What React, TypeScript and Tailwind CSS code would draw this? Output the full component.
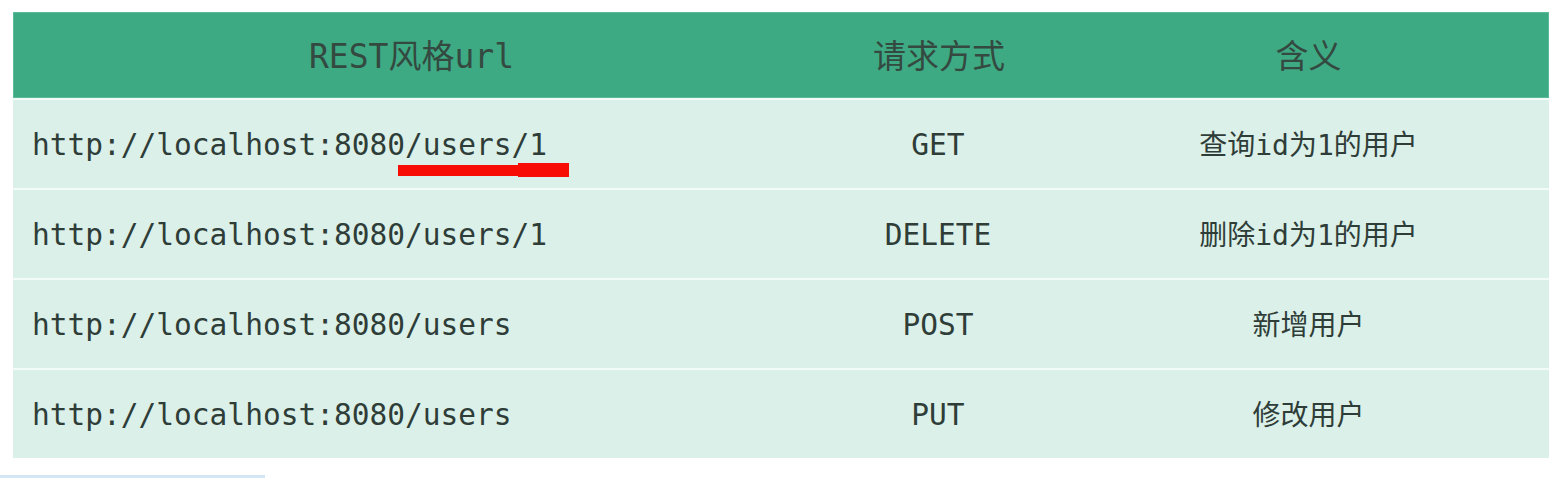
import React from 'react'

type Row = {
    url: string
    method: string
    meaning: string
    marked?: boolean
}

const rows: Row[] = [
    { url: 'http://localhost:8080/users/1', method: 'GET', meaning: '查询id为1的用户', marked: true },
    { url: 'http://localhost:8080/users/1', method: 'DELETE', meaning: '删除id为1的用户' },
    { url: 'http://localhost:8080/users', method: 'POST', meaning: '新增用户' },
    { url: 'http://localhost:8080/users', method: 'PUT', meaning: '修改用户' },
]

const font = 'font-["DejaVu_Sans_Mono","Noto_Sans_CJK_SC",monospace]'

const App = () => {
    return (
        <div className={`w-[1559px] h-[480px] bg-white pt-[12px] overflow-hidden ${font}`}>
            <div className="ml-[13px] w-[1536px] flex flex-col gap-[2px] bg-[#f3fbf8]">
                {/* header */}
                <div className="grid grid-cols-[795px_260px_1fr] h-[86px] pt-[3px] bg-[#3eaa84] border border-[#5cbb98] text-[#34493f] text-[33px] items-center">
                    <div className="text-center">REST风格url</div>
                    <div className="text-center">请求方式</div>
                    <div className="text-center">含义</div>
                </div>

                {rows.map((row, i) => (
                    <div
                        key={i}
                        className="relative grid grid-cols-[795px_260px_1fr] h-[88px] pt-[3px] bg-[#dbf0e8] text-[#2f3d38] items-center"
                    >
                        <div className="pl-[19px] text-[29.5px]">{row.url}</div>
                        <div className="text-center text-[29.5px]">{row.method}</div>
                        <div className="text-center text-[28px]">{row.meaning}</div>

                        {row.marked && (
                            <div className="absolute left-[385px] top-[63px] flex items-center">
                                <div className="w-[120px] h-[11px] bg-[#f80d05]" />
                                <div className="w-[51px] h-[14px] bg-[#f80d05]" />
                            </div>
                        )}
                    </div>
                ))}
            </div>
            <div className="mt-[17px] h-[3px] w-[265px] bg-[#d4e5f4]" />
        </div>
    )
}

export default App
